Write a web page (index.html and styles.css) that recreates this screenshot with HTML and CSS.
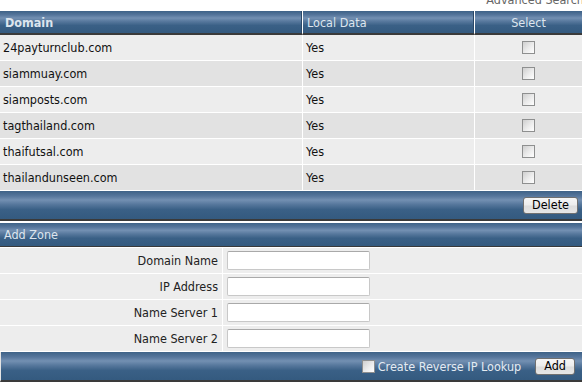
FILE: index.html
```html
<!DOCTYPE html>
<html lang="en">
<head>
    <meta charset="UTF-8">
    <title>DNS Zones</title>
    <link rel="stylesheet" href="styles.css">
</head>
<body>
    <div class="top"><a href="#">Advanced Search</a></div>

    <table class="zones">
        <thead>
            <tr>
                <th class="col-domain">Domain</th>
                <th class="col-local">Local Data</th>
                <th class="col-select">Select</th>
            </tr>
        </thead>
        <tbody>
            <tr><td>24payturnclub.com</td><td>Yes</td><td class="sel"><input type="checkbox"></td></tr>
            <tr><td>siammuay.com</td><td>Yes</td><td class="sel"><input type="checkbox"></td></tr>
            <tr><td>siamposts.com</td><td>Yes</td><td class="sel"><input type="checkbox"></td></tr>
            <tr><td>tagthailand.com</td><td>Yes</td><td class="sel"><input type="checkbox"></td></tr>
            <tr><td>thaifutsal.com</td><td>Yes</td><td class="sel"><input type="checkbox"></td></tr>
            <tr><td>thailandunseen.com</td><td>Yes</td><td class="sel"><input type="checkbox"></td></tr>
        </tbody>
    </table>

    <div class="bar actions">
        <button class="btn">Delete</button>
    </div>

    <div class="bar title">Add Zone</div>

    <div class="form">
        <div class="row"><label for="domainName">Domain Name</label><div class="field"><input type="text" id="domainName"></div></div>
        <div class="row"><label for="ipAddress">IP Address</label><div class="field"><input type="text" id="ipAddress"></div></div>
        <div class="row"><label for="ns1">Name Server 1</label><div class="field"><input type="text" id="ns1"></div></div>
        <div class="row"><label for="ns2">Name Server 2</label><div class="field"><input type="text" id="ns2"></div></div>
    </div>

    <div class="bar actions footer">
        <label class="check"><input type="checkbox"> Create Reverse IP Lookup</label>
        <button class="btn">Add</button>
    </div>
</body>
</html>
```

FILE: styles.css
```css
body {
    margin: 0;
    font-family: "DejaVu Sans Condensed", "DejaVu Sans", sans-serif;
    font-size: 12.5px;
    line-height: 15px;
    color: #111;
    background: #fff;
    overflow: hidden;
}

.top {
    height: 11px;
    overflow: hidden;
    text-align: right;
}

.top a {
    display: block;
    margin-top: -8px;
    margin-right: -2px;
    line-height: 16px;
    color: #666;
    text-decoration: none;
}

/* blue bars */
.zones th,
.bar {
    background: linear-gradient(to bottom, #3e6287 0%, #56769c 18%, #7390b2 32%, #56779c 48%, #3a6086 66%, #345a7f 100%);
    color: #dde5ee;
}

.zones {
    width: 100%;
    border-collapse: separate;
    border-spacing: 0;
}

.zones th {
    height: 22px;
    padding: 0 4px;
    font-weight: normal;
    text-align: left;
    border-bottom: 2px solid #3a3a3a;
    border-right: 1px solid #fff;
    box-shadow: inset -1px 0 #2a4868;
}

.zones th.col-domain {
    width: 293px;
    padding-left: 5px;
    font-weight: bold;
}

.zones th.col-local {
    width: 163px;
}

.zones th.col-select {
    text-align: center;
    border-right: 0;
    box-shadow: none;
}

.zones td {
    height: 25px;
    padding: 0 3px;
    background: #ededed;
    border-bottom: 1px solid #fff;
    border-right: 1px solid #fff;
}

.zones tr:nth-child(even) td {
    background: #e2e2e2;
}

.zones td.sel {
    border-right: 0;
}

.zones td.sel input {
    display: block;
    margin: 0 auto;
}

input[type="checkbox"] {
    appearance: none;
    -webkit-appearance: none;
    width: 13px;
    height: 13px;
    margin: 0;
    border: 1px solid #8e8f8f;
    background: linear-gradient(135deg, #cfcfcf 0%, #ececec 55%, #fff 100%);
}

.bar {
    display: flex;
    align-items: center;
    border-bottom: 2px solid #3a3a3a;
}

.actions {
    height: 28px;
    justify-content: flex-end;
    padding-right: 4px;
    margin-bottom: 2px;
}

.title {
    height: 23px;
    padding-left: 4px;
    border-bottom-width: 1px;
    margin-bottom: 1px;
}

.btn {
    height: 17px;
    padding: 0 8px;
    font-family: inherit;
    font-size: 12.5px;
    color: #000;
    border: 1px solid #707070;
    border-radius: 3px;
    background: linear-gradient(to bottom, #f6f6f6 0%, #ececec 48%, #dcdcdc 52%, #e6e6e6 100%);
    line-height: 14px;
}

.form .row {
    display: grid;
    grid-template-columns: 223px 1fr;
    height: 25px;
    background: #ededed;
    border-bottom: 1px solid #fff;
}

.form label {
    text-align: right;
    line-height: 25px;
    padding-right: 4px;
    border-right: 1px solid #fff;
    color: #222;
}

.form .field {
    display: flex;
    align-items: center;
    padding-left: 4px;
}

.form input[type="text"] {
    width: 139px;
    height: 15px;
    border: 1px solid #c8c8c8;
    border-top-color: #a9a9a9;
    border-radius: 2px;
    background: #fff;
    padding: 1px;
}

.footer {
    height: 28px;
    padding-right: 7px;
    margin-bottom: 0;
    border-left: 1px solid #e4e4e4;
}

.check {
    display: flex;
    align-items: center;
    gap: 3px;
    margin-right: 14px;
    color: #e4ebf2;
}
```
